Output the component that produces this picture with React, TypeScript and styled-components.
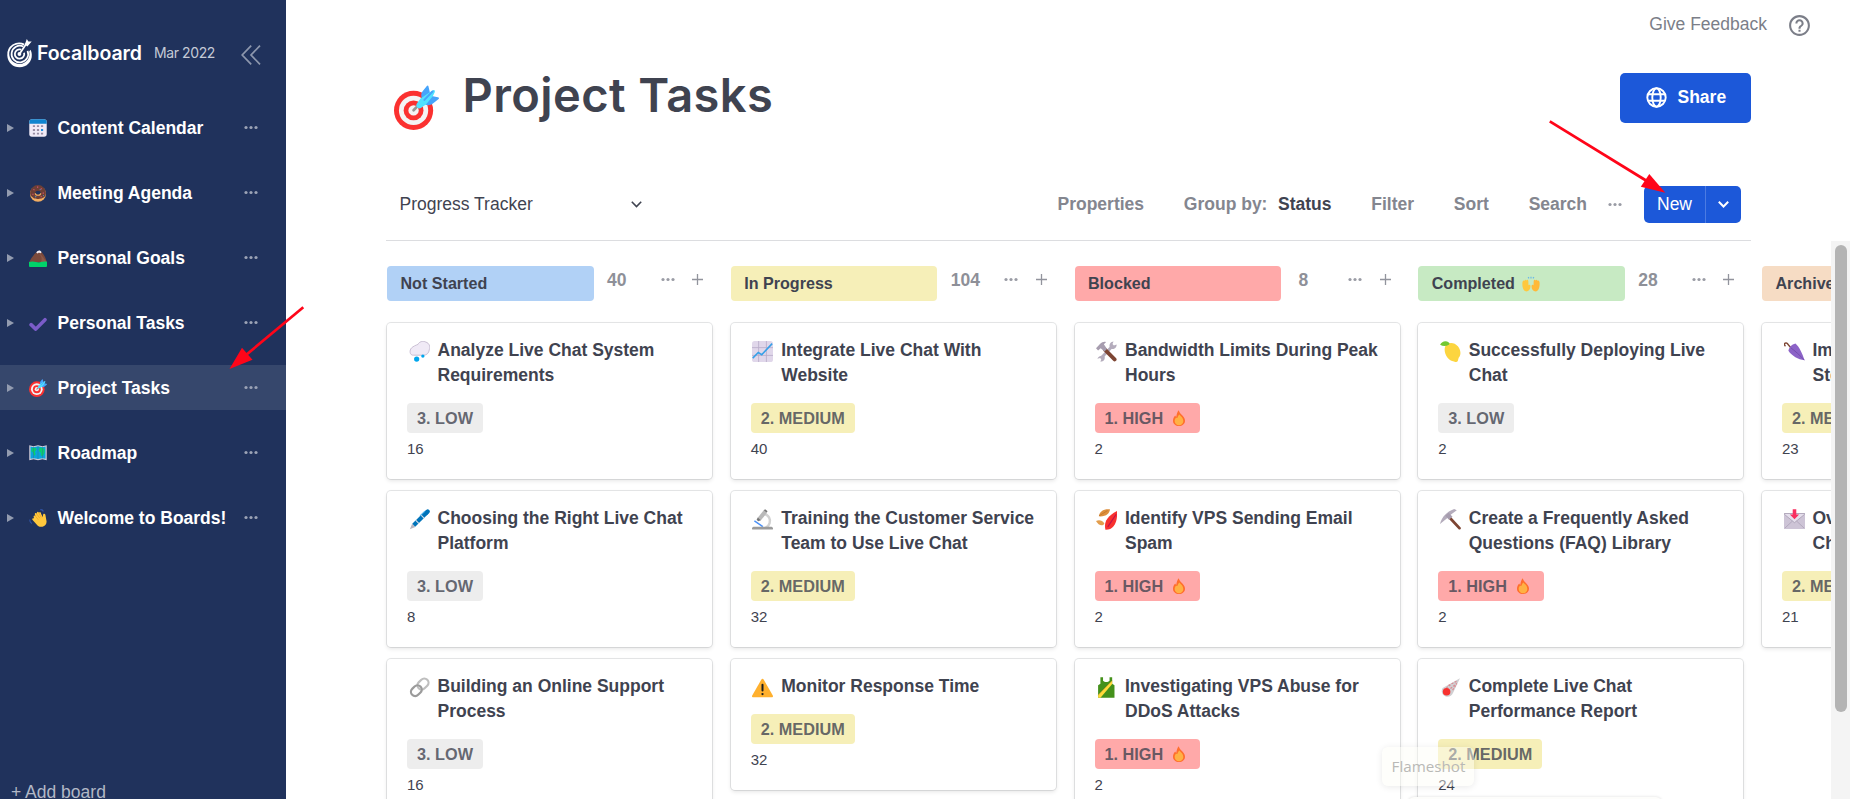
import React from 'react';
import styled, { createGlobalStyle } from 'styled-components';

const ink = '#3f4350';

const GlobalStyle = createGlobalStyle`
  * { box-sizing: border-box; }
  body {
    margin: 0;
    overflow: hidden;
    background: #fff;
    color: ${ink};
    font-family: "Liberation Sans", Arial, sans-serif;
    font-size: 17.5px;
  }
  svg { display: block; flex: none; }
`;

/* ---------- emoji drawings, all on a 20x20 grid ---------- */

const emoji: Record<string, React.ReactNode> = {
  calendar: (
    <>
      <rect x="0.3" y="0.3" width="19.4" height="19.4" rx="3" fill="#f0eaf6" />
      <path d="M.3 5.2V3.3a3 3 0 0 1 3-3h13.4a3 3 0 0 1 3 3v1.9z" fill="#0f84cf" />
      <path d="M4.3 8h2.4M8.8 8h2.4M13.300 8h2.400M4.300 12.200h2.400M8.800 12.200h2.400M4.300 16.200h2.400M8.800 16.200h2.400M13.300 16.200h2.400" stroke="#998ea4" strokeWidth="2" />
      <path d="M13.300 12.200h2.400" stroke="#1b8fe0" strokeWidth="2.200" />
    </>
  ),
  donut: (
    <>
      <circle cx="10" cy="11" r="8.800" fill="#f3ad61" />
      <path d="M1.200 10a8.800 8.800 0 0 1 17.600 0c0 2-1 4.200-2.500 5-1.500.5-2.500 1.500-4 1.200-1.500.8-3 .8-4.600 0-1.600.2-2.700-.3-3.700-1.400C2.300 14 1.200 12 1.200 10z" fill="#6e3f35" />
      <ellipse cx="10" cy="9.700" rx="3" ry="2.300" fill="#1e325c" />
      <path d="M7 10.300a3 2.200 0 0 0 6 0" fill="none" stroke="#f3ad61" strokeWidth="1.300" />
      <path d="M5 6l1 .8M9 3.500h1.200M14 5l-.8.800M4 11l.800.800M15.800 9.500v1.200M13 14h1" stroke="#e0577d" strokeWidth="1.200" />
      <path d="M7 13.800l1 .6M12 6.500l.8-.6M16.300 12.600l-.6.6" stroke="#4aa7e8" strokeWidth="1.200" />
    </>
  ),
  mountain: (
    <>
      <path d="M0 15C2 11 4.500 7 8 4c2-2.600 4-3 6-.5 3 3.200 4.500 6.500 6 11.500z" fill="#7b4a3c" />
      <path d="M11 5c3 1 5 5 9 10H13c2-4 1-7-2-10z" fill="#8d5a4a" />
      <path d="M8 4c1.700-2.500 4.300-3.500 6-.5l-1.300 1.300-1.700-1-1.300 1.200z" fill="#f4f1f8" />
      <path d="M0 14.500c5-1.800 9 .8 12 .3 3-.5 5-1.200 8-.5V19a1 1 0 0 1-1 1H1a1 1 0 0 1-1-1z" fill="#00d26a" />
    </>
  ),
  check: <path d="M2.300 11.800l5.200 5L17.800 6.300" fill="none" stroke="#7b5cc9" strokeWidth="3.900" strokeLinecap="round" strokeLinejoin="round" />,
  target: (
    <>
      <circle cx="8.700" cy="11.300" r="8.700" fill="#fb3130" />
      <circle cx="8.700" cy="11.300" r="6.500" fill="#f4f4f4" />
      <circle cx="8.700" cy="11.300" r="4.400" fill="#fb3130" />
      <circle cx="8.700" cy="11.300" r="2.300" fill="#f4f4f4" />
      <path d="M8.700 11.200l2.400-2.500" stroke="#969696" strokeWidth="1.200" strokeLinecap="round" />
      <path d="M12.300 5.800c-.4-1.500-.1-2.300.6-3.200L14.500.5c.4-.5.700-.4.800.1l.7 3-2.500 3.400zM14 8.800c1.400.4 2.500 0 3.300-.6l2.400-1.900c.5-.4.3-.8-.2-.9l-3.300-.6-3 2.500z" fill="#46a4fb" />
      <path d="M15.700 3.300l1.500-.9c.7-.4 1.200.1.900.8l-.8 1.700-3 3.600-2.200 1.600c-1 .9-2.700-.4-2-1.800l1.700-2.300z" fill="#50e2ff" />
      <path d="M13.500 6.600l3.600-3.700" stroke="#46a4fb" strokeWidth=".9" strokeLinecap="round" />
    </>
  ),
  map: (
    <>
      <path d="M.3 1.500l4.700 1 5-1 5 1 4.700-1V18l-4.700-1-5 1-5-1-4.700 1z" fill="#d5d0dc" />
      <path d="M1.600 2.800L5 3.500l5-1 5 1 3.400-.700v13.600L15 15.700l-5 1-5-1-3.400.700z" fill="#0aa5dd" />
      <path d="M3 4.500l4-.3 1.600 1.600L6.500 9l1 2-1.700 2.300L4.300 9.200 2.600 8zM11.500 4l4 .5 2 1.500-.3 4-2 3.500-2-.8-.2-3.200-2-1.500z" fill="#09cf72" />
      <path d="M5 3v13M10 2.500V17M15 3v13" stroke="#3a7090" strokeWidth=".5" />
    </>
  ),
  wave: (
    <>
      <path d="M5.300 9.200C4.500 7.500 6.300 6.600 7.200 8L6.500 6c-.4-1.300 1.300-2 2-.8L8.800 4c.4-1.200 1.900-1 2.100.2l.7-.5c1-.6 2 .3 1.700 1.400l2 4.200.3-2.800c.1-1.700 2.300-1.800 2.600-.2l1.300 7.200c.3 3-1.700 5.300-4.500 6.100-3 .7-5-.5-6.500-2.400L4 12.300c-1-1.300.4-2.600 1.600-1.700z" fill="#ffc83d" />
      <path d="M7.200 8l3.200 4M8.500 5.300l3.600 5M11 4.300l2.600 5" stroke="#e89b25" strokeWidth=".7" />
      <path d="M12.500.8c1.500-.3 2.900.5 3.500 2M.9 11.800c-.1 1.800.6 3.400 2.200 4.400" stroke="#3154a4" strokeWidth="1.300" fill="none" />
    </>
  ),
  cloud: (
    <>
      <path d="M4.300 13.500C.6 14 .1 8.800 2.500 6.500 4 5.200 6.300 4 8.500 3.300 9.800.4 13.500-.4 16 1c3.500 1.100 4.400 4.400 3.400 7.200-.5 3.400-2.500 5.300-5.400 5.300z" fill="#f0eaf6" stroke="#b9adc6" strokeWidth=".7" />
      <circle cx="7.300" cy="17.200" r="2.500" fill="#00a6ed" />
      <circle cx="13.200" cy="14.400" r="1.600" fill="#00a6ed" />
    </>
  ),
  pen: (
    <>
      <path d="M.8 19.200l2.200-5.200 3 3.200z" fill="#b8b5bf" />
      <path d="M4.500 15.500L17.300 2.800" stroke="#0074ba" strokeWidth="4" />
      <path d="M16.300 3.800l1.500-1.500" stroke="#0074ba" strokeWidth="4" strokeLinecap="round" />
      <path d="M6.300 10.700l3.200 3.200M11.300 5.700l3.200 3.200" stroke="#d8dfe8" strokeWidth="1" />
      <path d="M10.500 6.500l4.700-4.500" stroke="#4fb3ed" strokeWidth="1" />
    </>
  ),
  link: (
    <g fill="none" strokeWidth="2.100">
      <rect x="-5.800" y="-4" width="11.600" height="8" rx="4" transform="translate(13.300 6.700) rotate(-45)" stroke="#bebebe" />
      <rect x="-5.600" y="-4" width="11.200" height="8" rx="4" transform="translate(7 13) rotate(-45)" stroke="#9b9b9b" />
    </g>
  ),
  chart: (
    <>
      <rect width="20" height="20" rx="2.500" fill="#e0d7ea" />
      <path d="M6.300 0v20M13.700 0v20M0 6.300h20M0 13.700h20" stroke="#b9adc9" strokeWidth=".8" />
      <path d="M.7 16.300L6 11l3.300 2 9.900-10.500" fill="none" stroke="#36a0e8" strokeWidth="1.500" />
    </>
  ),
  microscope: (
    <>
      <path d="M11 4.500c5 1 7 5.500 5.800 9-.6 2.200-2 3.500-3.800 4.500" fill="none" stroke="#d2d2d2" strokeWidth="2.300" />
      <path d="M5.300 8.500L11.300 1l3 2.500-6 7.500z" fill="#b9b9b9" />
      <path d="M11.200 1.300L12.500.2l2.400 1.900-1.200 1.300zM5.500 8.200l3 2.500-2.600.9-1.500-1.300z" fill="#767676" />
      <path d="M2.300 11.300l8 5.400" stroke="#4b91f7" strokeWidth="1.400" />
      <path d="M1.800 17h16.400a1.600 1.600 0 0 1 1.500 2.500H.3A1.600 1.600 0 0 1 1.800 17z" fill="#9b9b9b" />
    </>
  ),
  warning: (
    <>
      <path d="M8.800 2.500c.6-1 1.800-1 2.400 0l8.600 15c.5 1 0 1.900-1 1.900H1.200c-1 0-1.500-.9-1-1.900z" fill="#ffb02e" />
      <path d="M10 7.300v5.500" stroke="#1c1c1c" strokeWidth="1.900" strokeLinecap="round" />
      <circle cx="10" cy="16.300" r="1.100" fill="#1c1c1c" />
    </>
  ),
  tools: (
    <>
      <path d="M4.700 16.400L15.600 4.700" stroke="#b4acbc" strokeWidth="2.700" />
      <path d="M13 5.500c-.6-2.600 1-4.900 3.700-5.100l-1 2.500 1.300 1.400 2.600-1c.3 2.700-2 4.700-4.800 4.200zM1.300 16.800l2.600-.7 1.100 1.200-.8 2.500c3.300-.1 4.800-2.300 3.900-5.200-2.600-1.400-5.700-.4-6.800 2.200z" fill="#b4acbc" />
      <path d="M8.700 8.500l9 9" stroke="#7d4533" strokeWidth="3.700" strokeLinecap="round" />
      <path d="M0 7L4 2.700C5.500 1 8.500.3 9.500 1.200L7.500 3l3 4.500L8 10 4.500 7 2 9z" fill="#a79daf" />
    </>
  ),
  leaves: (
    <>
      <path d="M2.700 7C3.200 2.300 7-.3 13.300.2 13 4 9.700 7.500 2.700 7z" fill="#dd8f3d" />
      <path d="M0 11.500c2.800-1.600 6-.7 8 2.200-1.500 3-5.600 2.200-8-2.200z" fill="#e39d4c" />
      <path d="M9 19.800c-1.400-6 0-11.900 11-17.800.8 10.900-3.300 18-11 17.800z" fill="#f8312f" />
      <path d="M11.200 17L19.200 5" stroke="#c0124c" strokeWidth="1.100" />
      <path d="M3 6.500l8-5" stroke="#b86b21" strokeWidth=".6" />
    </>
  ),
  dress: (
    <>
      <path d="M4.200.2h2.500v3.300c1.500 1.700 4.700 1.700 6.200 0V.2h2.500v6.300l2.200 1.300v12H2v-12l2.200-1.300z" fill="#44911b" />
      <path d="M2 19.800v-2.500L15.400 3.500v3.200L4.300 19.800z" fill="#ffdb3a" />
      <path d="M2 17.300L15.400 3.500" stroke="#e8a22c" strokeWidth=".6" />
    </>
  ),
  lemon: (
    <>
      <path d="M5 5c2.500-4.500 8.800-4 12 0 2.700 3.300 3.500 8 .8 11l-.8 2.800c-.3 1.500-2.600 1.500-3.700.7C7.500 19 2.700 11 5 5z" fill="#fcd53f" />
      <path d="M.1 3.600C1.700.3 5.600-.8 8.400 1.500c.8.6.8 1.400 0 2.100C5.800 5.300 2.700 5.200.1 3.600z" fill="#73c832" />
    </>
  ),
  pick: (
    <>
      <path d="M7.300 6.200l11.200 12" stroke="#7d4533" strokeWidth="2.700" strokeLinecap="round" />
      <path d="M0 14.200C2 7.200 6 3 13.500 0L16 1.200 9.500 6 6.500 9z" fill="#b4acbc" />
      <path d="M5 6.500l3.300-3 3.600 3.800-3.400 3z" fill="#a79daf" />
    </>
  ),
  comet: (
    <>
      <path d="M2.500 10.500L19 1.300 12.500 15c-1.400 3.300-4.700 4.600-7.600 3.300-3-1.500-4.200-5-2.400-7.800z" fill="#d0cfd2" />
      <path d="M8 8l8-4M10 11l6-5M12 12.500l4-6M6 10.500l4-3" stroke="#db8a91" strokeWidth="1.100" strokeDasharray="2 1.300" />
      <circle cx="6.300" cy="14" r="3.600" fill="#f8312f" />
    </>
  ),
  umbrella: (
    <>
      <path d="M7 7L4 3.500C2.600.3-1 2.300 1 4.500" fill="none" stroke="#7d4533" strokeWidth="1.400" strokeLinecap="round" />
      <path d="M4.200 9.300c.5-3 3.200-6.300 6.700-7 3.700 3.200 6.700 9.600 8.600 16-6-.7-12-4-15.300-9z" fill="#8c63c7" />
      <path d="M6.500 6.500c3.500 2.500 8.500 7 13 11.800" fill="none" stroke="#704baa" strokeWidth=".8" />
    </>
  ),
  inbox: (
    <>
      <rect x="0" y="4" width="20" height="15" rx="1" fill="#cdc4d6" />
      <path d="M.3 5l9.700 8 9.700-8v-.7H.3z" fill="#e5dfec" stroke="#998ea4" strokeWidth=".6" />
      <path d="M.5 18.500L8 11.500M19.500 18.500L12 11.500" stroke="#aaa0b5" strokeWidth=".7" />
      <path d="M8.300.2h3.400v5h2.700L10 9.800 5.600 5.200h2.700z" fill="#f92f60" />
    </>
  ),
  fire: (
    <>
      <path d="M9.800.3c.4 2 1.500 3.500 3.200 5.200 2.700 2.400 4.500 4.800 4.500 7.800 0 4-3.400 6.600-7.500 6.600s-7.500-2.600-7.500-6.600c0-2.800 1.200-4.800 2.800-6.500.4 1 .8 1.400 1.400 1.600C6.900 5.500 7.800 2.300 9.800.3z" fill="#ff6f2c" />
      <path d="M10.500 5.500c2 2.300 4.900 4.500 4.900 8.200 0 3-2.400 5.400-5.400 5.400s-5.400-2.400-5.400-5.300c0-2 .9-3.400 2-4.300.5.5.8.6 1.300.6.300-1.500 1.300-3.300 2.600-4.600z" fill="#ffb144" />
    </>
  ),
  hands: (
    <>
      <path d="M.5 8C0 12 1 17.500 4.500 18.200 8 18 9.500 15.500 9.400 12.500c.2-1.500-1.300-2.300-2.200-1L7 6.500C6.500 5 5.500 5 5 6 4.300 5 3.200 5.200 3 6.400 2 5.800.8 6.500.5 8z" fill="#ffc83d" />
      <path d="M19.500 8c.5 4-.5 9.500-4 10.200-3.500-.2-5-2.700-4.900-5.700-.2-1.500 1.300-2.300 2.200-1l.2-5c.5-1.500 1.500-1.500 2-.5.7-1 1.800-.8 2 .4 1-.6 2.200.1 2.500 1.600z" fill="#ffb938" />
      <path d="M10 2v2M6.800 2.300l1 1.500M13.200 2.300l-1 1.500" stroke="#69b8e8" strokeWidth="1.300" />
    </>
  ),
};

const Emoji = ({ name, size }: { name: string; size: number }) => (
  <svg width={size} height={size} viewBox="0 0 20 20">{emoji[name]}</svg>
);

const Dots = ({ color = '#9a9ca5' }: { color?: string }) => (
  <svg width="14" height="5" viewBox="0 0 14 5" fill={color}>
    <circle cx="2" cy="2.500" r="1.600" />
    <circle cx="7" cy="2.500" r="1.600" />
    <circle cx="12" cy="2.500" r="1.600" />
  </svg>
);

/* ---------- shell ---------- */

const Page = styled.div`
  position: relative;
  display: flex;
  width: 1850px;
  height: 799px;
  overflow: hidden;
`;

const Sidebar = styled.nav`
  display: flex;
  flex-direction: column;
  flex: none;
  width: 286px;
  background: #20325c;
`;

const Brand = styled.div`
  display: flex;
  flex: none;
  align-items: center;
  height: 105px;
  padding: 2px 25px 0 6px;
  color: #fff;
`;

const BrandName = styled.span`
  width: 106px;
  margin: -2px 0 0 4px;
  font: 600 19.5px/24px Inter, sans-serif;
  letter-spacing: -0.05px;
  white-space: nowrap;
`;

const Version = styled.span`
  margin: -1px 0 0 11px;
  color: #c5cad6;
  font: 400 14px/20px Inter, sans-serif;
  letter-spacing: -0.4px;
  white-space: nowrap;
`;

const Collapse = styled.span`
  margin: 2px 0 0 auto;
`;

const BoardList = styled.div`
  display: flex;
  flex-direction: column;
  gap: 20px;
`;

const BoardItem = styled.div<{ $active?: boolean }>`
  display: flex;
  align-items: center;
  height: 45px;
  padding: 0 28px 0 7px;
  background: ${(p) => (p.$active ? '#36476c' : 'transparent')};
  color: #fff;
  font-weight: 700;
`;

const Caret = styled.span`
  width: 0;
  margin-top: 1px;
  margin-right: 14.5px;
  border-style: solid;
  border-width: 4.5px 0 4.5px 7.5px;
  border-color: transparent transparent transparent #939cb0;
`;

const BoardName = styled.span`
  flex: 1;
  margin-left: 11px;
  padding-top: 2px;
  white-space: nowrap;
`;

const AddBoard = styled.div`
  margin-top: auto;
  height: 19px;
  padding-left: 11px;
  color: #b2b8c6;
  line-height: 25px;
  white-space: nowrap;
`;

const Main = styled.main`
  display: flex;
  flex-direction: column;
  flex: 1;
  min-width: 0;
`;

const TopBar = styled.header`
  display: flex;
  flex: none;
  justify-content: flex-end;
  gap: 20px;
  height: 62px;
  padding: 12px 38px 0 0;
  color: #7b7e88;
  line-height: 24px;
`;

const HelpSlot = styled.span`
  padding-top: 1px;
`;

const TitleRow = styled.div`
  display: flex;
  flex: none;
  align-items: flex-start;
  height: 106px;
  padding: 0 99px 0 107.5px;
`;

const TitleIcon = styled.span`
  padding-top: 22.5px;
`;

const Title = styled.h1`
  flex: 1;
  margin: 3px 0 0 24px;
  color: ${ink};
  font: 600 47px/60px Inter, sans-serif;
  letter-spacing: 0.4px;
`;

const ShareButton = styled.button`
  display: flex;
  align-items: center;
  gap: 10.5px;
  width: 131px;
  height: 50px;
  margin-top: 11px;
  padding: 0 0 2px 26px;
  border: 0;
  border-radius: 5px;
  background: #1c58d9;
  color: #fff;
  font: 700 17.5px/20px "Liberation Sans", Arial, sans-serif;
`;

const ViewBar = styled.div`
  display: flex;
  flex: none;
  align-items: center;
  height: 73px;
  margin: 0 99px 0 100px;
  padding: 0 10px 0 13.5px;
  border-bottom: 1px solid #dcdde0;
`;

const ViewName = styled.span`
  width: 231px;
`;

const Actions = styled.div`
  display: flex;
  align-items: center;
  gap: 39.8px;
  margin-left: auto;
  margin-right: 21px;
  color: #84868f;
  font-weight: 700;
`;

const GroupBy = styled.span`
  display: flex;
  gap: 10.5px;
`;

const GroupValue = styled.span`
  color: ${ink};
`;

const NewButton = styled.div`
  display: flex;
  width: 97px;
  height: 37px;
  margin: 1px 0 0 22px;
  border-radius: 5px;
  background: #1c58d9;
  color: #fff;
  line-height: 37px;
`;

const NewText = styled.span`
  width: 62px;
  padding-left: 13px;
  border-right: 1px solid #4c7be2;
`;

const NewArrow = styled.span`
  display: grid;
  flex: 1;
  place-items: center;
`;

/* ---------- board ---------- */

const BoardArea = styled.section`
  display: flex;
  flex: 1;
  min-height: 0;
`;

const Columns = styled.div`
  display: flex;
  flex: 1;
  gap: 18.75px;
  min-width: 0;
  padding-left: 101px;
  overflow: hidden;
`;

const Column = styled.div`
  display: flex;
  flex: none;
  flex-direction: column;
  width: 325px;
  padding-top: 25px;
`;

const ColumnHeader = styled.div`
  display: flex;
  flex: none;
  height: 35px;
  margin-bottom: 22px;
`;

const ColumnLabel = styled.div<{ $color: string }>`
  display: flex;
  align-items: center;
  gap: 7px;
  width: 206.5px;
  padding-left: 13.5px;
  border-radius: 4px;
  background: ${(p) => p.$color};
  font-size: 16.1px;
  font-weight: 700;
`;

const ColumnTools = styled.div`
  display: flex;
  flex: 1;
  align-items: center;
  height: 27px;
  padding: 0 9px 0 13.5px;
  color: #8e9098;
`;

const Count = styled.span`
  min-width: 17.5px;
  margin-right: auto;
  padding-top: 1px;
  text-align: center;
  font-weight: 700;
`;

const Plus = styled.span`
  margin-left: 17.5px;
`;

const Card = styled.article`
  flex: none;
  margin-bottom: 12px;
  padding: 14.5px 20px 20px;
  border-radius: 4px;
  background: #fff;
  box-shadow: 0 0 0 1px rgba(63, 67, 80, 0.13), 0 2px 4px rgba(0, 0, 0, 0.1);
`;

const CardHead = styled.div`
  display: flex;
  gap: 8px;
  margin-bottom: 15.5px;
`;

const CardIcon = styled.span`
  padding: 3.5px 0 0 1.5px;
`;

const CardTitle = styled.div`
  font-weight: 700;
  line-height: 25px;
  white-space: pre-line;
`;

const Badge = styled.span<{ $color: string }>`
  display: flex;
  align-items: center;
  gap: 8px;
  width: fit-content;
  height: 30px;
  padding: 0 10px;
  border-radius: 4px;
  background: ${(p) => p.$color};
  color: rgba(63, 67, 80, 0.8);
  font-size: 16.25px;
  font-weight: 700;
  white-space: nowrap;
`;

const BadgeIcon = styled.span`
  padding-right: 3px;
`;

const CardValue = styled.div`
  margin-top: 6px;
  font-size: 15px;
  line-height: 20px;
`;

const ScrollTrack = styled.div`
  flex: none;
  width: 19px;
  padding: 4px 3px 0 4px;
  background: #f4f4f4;
`;

const ScrollThumb = styled.div`
  height: 467px;
  border-radius: 6px;
  background: #b4b4b4;
`;

/* ---------- overlays ---------- */

const Tooltip = styled.div`
  position: absolute;
  left: 1382px;
  top: 747px;
  width: 92px;
  height: 39px;
  padding-left: 1px;
  border-radius: 6px;
  background: rgba(253, 253, 246, 0.45);
  box-shadow: 0 1px 7px rgba(0, 0, 0, 0.09);
  color: #b9b9b6;
  font: 400 15.2px/39px "Open Sans", sans-serif;
  text-align: center;
`;

const LowerPanel = styled.div`
  position: absolute;
  left: 1408px;
  top: 797px;
  width: 254px;
  height: 12px;
  border-radius: 6px;
  background: #fdfdfb;
  box-shadow: 0 0 3px rgba(0, 0, 0, 0.14);
`;

const Arrows = styled.svg`
  position: absolute;
  inset: 0;
`;

/* ---------- data ---------- */

type Level = 'low' | 'medium' | 'high';

const levels: Record<Level, { text: string; color: string }> = {
  low: { text: '3. LOW', color: '#ededed' },
  medium: { text: '2. MEDIUM', color: '#f6efb8' },
  high: { text: '1. HIGH', color: '#ffa9a9' },
};

const boards = [
  ['calendar', 'Content Calendar'],
  ['donut', 'Meeting Agenda'],
  ['mountain', 'Personal Goals'],
  ['check', 'Personal Tasks'],
  ['target', 'Project Tasks'],
  ['map', 'Roadmap'],
  ['wave', 'Welcome to Boards!'],
];

type CardData = [icon: string, title: string, level: Level, value: string];

const columns: { name: string; icon?: string; color: string; count: string; cards: CardData[] }[] = [
  {
    name: 'Not Started', color: '#b1d1f6', count: '40',
    cards: [
      ['cloud', 'Analyze Live Chat System\nRequirements', 'low', '16'],
      ['pen', 'Choosing the Right Live Chat\nPlatform', 'low', '8'],
      ['link', 'Building an Online Support\nProcess', 'low', '16'],
    ],
  },
  {
    name: 'In Progress', color: '#f6efb8', count: '104',
    cards: [
      ['chart', 'Integrate Live Chat With\nWebsite', 'medium', '40'],
      ['microscope', 'Training the Customer Service\nTeam to Use Live Chat', 'medium', '32'],
      ['warning', 'Monitor Response Time', 'medium', '32'],
    ],
  },
  {
    name: 'Blocked', color: '#ffa9a9', count: '8',
    cards: [
      ['tools', 'Bandwidth Limits During Peak\nHours', 'high', '2'],
      ['leaves', 'Identify VPS Sending Email\nSpam', 'high', '2'],
      ['dress', 'Investigating VPS Abuse for\nDDoS Attacks', 'high', '2'],
    ],
  },
  {
    name: 'Completed', icon: 'hands', color: '#c7eac3', count: '28',
    cards: [
      ['lemon', 'Successfully Deploying Live\nChat', 'low', '2'],
      ['pick', 'Create a Frequently Asked\nQuestions (FAQ) Library', 'high', '2'],
      ['comet', 'Complete Live Chat\nPerformance Report', 'medium', '24'],
    ],
  },
  {
    name: 'Archived', color: '#f6dcc4', count: '44',
    cards: [
      ['umbrella', 'Improve\nSteps', 'medium', '23'],
      ['inbox', 'Overview\nChat', 'medium', '21'],
    ],
  },
];

export default function App() {
  return (
    <Page>
      <GlobalStyle />
      <Sidebar>
        <Brand>
          <svg width="27" height="31" viewBox="0 0 27 31" fill="none" stroke="#fff">
            <path d="M18.600 5.800A12 12 0 0 0 1.300 17.500C1.600 24.500 7 29.300 13.500 29.300c7.200 0 12.700-5.800 12.300-12.600-.1-2-.5-3.500-1.300-5l-1.300 1.700c1.600 6-3 12.300-9.400 12.500C7.500 26 3 21 3.200 15.300 3.600 9.500 9 5 15.500 6.500l2.300.9z" fill="#fff" stroke="none" />
            <path d="M17.300 8.500a8.300 8.300 0 1 0 4.200 4.300" strokeWidth="1.700" />
            <path d="M15.200 11.600a4.700 4.700 0 1 0 2.900 3.200" strokeWidth="1.800" />
            <path d="M13.500 16L20.500 5.500" strokeWidth="1.700" />
            <path d="M18.800 6.500L20.800 1l1.600 2.600 3.300-.100-4.300 5z" fill="#fff" stroke="none" />
            <circle cx="13.400" cy="16" r="1.900" fill="#fff" stroke="none" />
          </svg>
          <BrandName>Focalboard</BrandName>
          <Version>Mar 2022</Version>
          <Collapse>
            <svg width="20" height="20" viewBox="0 0 20 20" fill="none" stroke="#8d97ad" strokeWidth="1.700">
              <path d="M10.200.6L1.200 10l9 9.400M19 .6L10 10l9 9.400" />
            </svg>
          </Collapse>
        </Brand>
        <BoardList>
          {boards.map(([icon, name]) => (
            <BoardItem key={name} $active={name === 'Project Tasks'}>
              <Caret />
              <Emoji name={icon} size={18} />
              <BoardName>{name}</BoardName>
              <Dots color="#9ba3b6" />
            </BoardItem>
          ))}
        </BoardList>
        <AddBoard>+ Add board</AddBoard>
      </Sidebar>
      <Main>
        <TopBar>
          <span>Give Feedback</span>
          <HelpSlot>
            <svg width="25" height="25" viewBox="0 0 24 24" fill="#7b7e88">
              <path d="M11 18h2v-2h-2v2zm1-16C6.480 2 2 6.480 2 12s4.480 10 10 10 10-4.480 10-10S17.520 2 12 2zm0 18c-4.410 0-8-3.590-8-8s3.590-8 8-8 8 3.590 8 8-3.590 8-8 8zm0-14c-2.210 0-4 1.790-4 4h2c0-1.100.9-2 2-2s2 .9 2 2c0 2-3 1.750-3 5h2c0-2.250 3-2.500 3-5 0-2.210-1.790-4-4-4z" />
            </svg>
          </HelpSlot>
        </TopBar>
        <TitleRow>
          <TitleIcon><Emoji name="target" size={45} /></TitleIcon>
          <Title>Project Tasks</Title>
          <ShareButton>
            <svg width="21" height="21" viewBox="0 0 21 21" fill="none" stroke="#fff" strokeWidth="1.900">
              <circle cx="10.500" cy="10.500" r="9.200" />
              <ellipse cx="10.500" cy="10.500" rx="4.200" ry="9.200" />
              <path d="M2 7.300h17M2 13.700h17" />
            </svg>
            Share
          </ShareButton>
        </TitleRow>
        <ViewBar>
          <ViewName>Progress Tracker</ViewName>
          <svg width="11" height="7" viewBox="0 0 11 7" fill="none" stroke={ink} strokeWidth="1.600">
            <path d="M.8.8l4.700 4.700L10.200.8" />
          </svg>
          <Actions>
            <span>Properties</span>
            <GroupBy>Group by: <GroupValue>Status</GroupValue></GroupBy>
            <span>Filter</span>
            <span>Sort</span>
            <span>Search</span>
          </Actions>
          <Dots />
          <NewButton>
            <NewText>New</NewText>
            <NewArrow>
              <svg width="11" height="7" viewBox="0 0 11 7" fill="none" stroke="#fff" strokeWidth="2">
                <path d="M.8.8l4.700 4.700L10.200.8" />
              </svg>
            </NewArrow>
          </NewButton>
        </ViewBar>
        <BoardArea>
          <Columns>
            {columns.map((column) => (
              <Column key={column.name}>
                <ColumnHeader>
                  <ColumnLabel $color={column.color}>
                    {column.name}
                    {column.icon && <Emoji name={column.icon} size={18} />}
                  </ColumnLabel>
                  <ColumnTools>
                    <Count>{column.count}</Count>
                    <Dots />
                    <Plus>
                      <svg width="11" height="11" viewBox="0 0 11 11" stroke="#92949d" strokeWidth="1.300">
                        <path d="M5.500 0v11M0 5.500h11" />
                      </svg>
                    </Plus>
                  </ColumnTools>
                </ColumnHeader>
                {column.cards.map(([icon, title, level, value]) => (
                  <Card key={title}>
                    <CardHead>
                      <CardIcon><Emoji name={icon} size={21} /></CardIcon>
                      <CardTitle>{title}</CardTitle>
                    </CardHead>
                    <Badge $color={levels[level].color}>
                      {levels[level].text}
                      {level === 'high' && <BadgeIcon><Emoji name="fire" size={16} /></BadgeIcon>}
                    </Badge>
                    <CardValue>{value}</CardValue>
                  </Card>
                ))}
              </Column>
            ))}
          </Columns>
          <ScrollTrack><ScrollThumb /></ScrollTrack>
        </BoardArea>
      </Main>
      <Tooltip>Flameshot</Tooltip>
      <LowerPanel />
      <Arrows width="1850" height="799" viewBox="0 0 1850 799" fill="#ff0519" stroke="#ff0519">
        <path d="M303.300 307.300L246 355" strokeWidth="2.700" />
        <path d="M229.500 369L242 347.700l10.500 12z" stroke="none" />
        <path d="M1549.800 121.300L1646 180.500" strokeWidth="2.700" />
        <path d="M1665.300 192.800L1649.300 174l-8.500 12.800z" stroke="none" />
      </Arrows>
    </Page>
  );
}
